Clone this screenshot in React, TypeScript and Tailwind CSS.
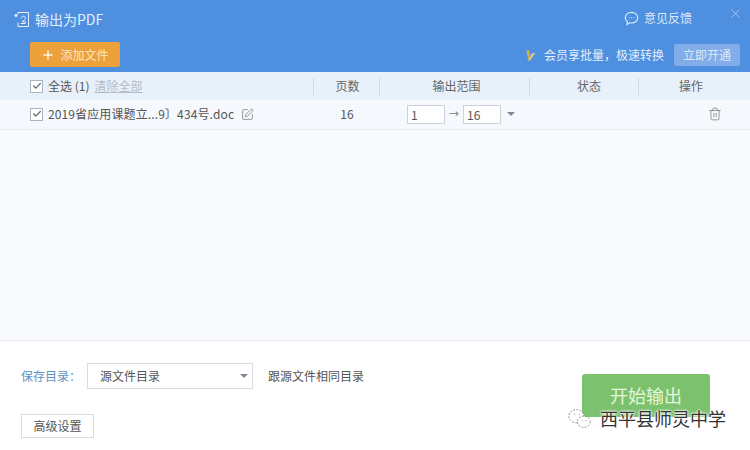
import { Check, Plus, X, SquarePen, Trash2 } from 'lucide-react';

const font = { fontFamily: '"Noto Sans CJK SC", "Liberation Sans", sans-serif' };

const Checkbox = () => (
    <span className="flex items-center justify-center w-[13px] h-[13px] border border-[#a9b4c0] bg-white shrink-0">
        <Check size={10} strokeWidth={3} className="text-[#5d6b7a]" />
    </span>
);

const HeadCell = ({ width, label, shift }: { width: string; label: string; shift: string }) => (
    <div className={`${width} ${shift} h-[17px] flex items-center justify-center border-l border-[#d0d9e3] text-xs text-[#666]`}>
        {label}
    </div>
);

const App = () => {
    return (
        <div className="relative w-[750px] h-[450px] overflow-hidden bg-white flex flex-col" style={font}>
            {/* Header */}
            <div className="h-[72px] bg-[#4f8fdf] flex flex-col shrink-0">
                <div className="h-[42px] flex items-start justify-between pl-[14px] pr-[7px] pt-[9px]">
                    <div className="flex items-center gap-[5px] text-[#e3eefb] text-[14px] leading-[20px]">
                        <svg width="16" height="17" viewBox="0 0 16 17" fill="none" stroke="#e8f1fc" strokeWidth="1">
                            <path d="M4 3.5V1.5h10.5v14H4v-4" />
                            <path d="M0.5 4.5h3M2 3v3" strokeWidth="1.4" />
                            <path d="M7 7.5c0-3 4.5-3 4.5-.3 0 2-3 2-3 3.8h3.5" />
                            <path d="M6.5 12.5h5" />
                        </svg>
                        <span>输出为PDF</span>
                    </div>
                    <div className="flex items-start">
                        <div className="flex items-center gap-[5px] mt-[1px] text-xs leading-[16px] text-[#dce9fa]">
                            <svg width="15" height="15" viewBox="0 0 14 14" fill="none" stroke="#dce9fa" strokeWidth="1.1">
                                <path d="M7 1.2c3.2 0 5.8 2.2 5.8 5s-2.6 5-5.8 5c-.6 0-1.2-.1-1.7-.2L2.8 12.6l.4-2.6C2 9.1 1.2 7.7 1.2 6.2c0-2.8 2.6-5 5.8-5z" />
                                <path d="M4.5 6.3h.8M6.7 6.3h.8M8.9 6.3h.8" />
                            </svg>
                            <span>意见反馈</span>
                        </div>
                        <X size={15} strokeWidth={1} className="text-[#cfe0f6] ml-[36px] mt-[-3px]" />
                    </div>
                </div>
                <div className="flex items-center justify-between pl-[30px] pr-[10px]">
                    <button className="w-[90px] h-[25px] bg-[#eda13a] rounded-[2px] flex items-center justify-center gap-[5px] text-xs text-[#fbe6c0]">
                        <Plus size={14} strokeWidth={2.4} className="text-[#fff6e5]" />
                        <span>添加文件</span>
                    </button>
                    <div className="flex items-center">
                        <svg width="13" height="12" viewBox="0 0 12 11" className="mr-[8px]">
                            <path d="M0.5 1h3.5l1.5 6.5L6.5 7 5.5 1z" fill="#c9b25e" />
                            <path d="M3 1h2.5L6.5 10.5H5z" fill="#c9b25e" />
                            <path d="M5 10.5h1.5L11.5 3.5 8 4z" fill="#e0ca72" />
                        </svg>
                        <span className="text-xs text-[#e3eefb] mr-[10px]">会员享批量，极速转换</span>
                        <button className="w-[66px] h-[22px] bg-[#82ade8] rounded-[2px] text-xs text-[#dce9fa]">立即开通</button>
                    </div>
                </div>
            </div>

            {/* Table head */}
            <div className="h-[28px] bg-[#e8f0fa] flex items-center shrink-0 pl-[30px]">
                <div className="w-[283px] flex items-center">
                    <Checkbox />
                    <span className="ml-[5px] text-xs leading-[16px] text-[#555]">全选 (1)</span>
                    <span className="ml-[5px] text-xs leading-[16px] text-[#b3bcc6] underline">清除全部</span>
                </div>
                <HeadCell width="w-[66px]" shift="pl-[2px]" label="页数" />
                <HeadCell width="w-[150px]" shift="pl-[4px]" label="输出范围" />
                <HeadCell width="w-[109px]" shift="pl-[10px]" label="状态" />
                <HeadCell width="w-[105px]" shift="pl-0" label="操作" />
            </div>

            {/* File row */}
            <div className="h-[30px] bg-[#f5f8fc] border-b border-[#e6ebf1] flex items-center shrink-0 pl-[30px] pb-[1px]">
                <div className="w-[283px] flex items-center">
                    <Checkbox />
                    <span className="ml-[5px] text-xs leading-[16px] tracking-[0.12px] text-[#555] whitespace-nowrap">2019省应用课题立...9〕434号.doc</span>
                    <SquarePen size={13} strokeWidth={1.2} className="ml-[7px] text-[#666]" />
                </div>
                <div className="w-[66px] pl-[2px] text-center text-xs leading-[16px] text-[#555]">16</div>
                <div className="w-[150px] flex items-center pl-[28px]">
                    <span className="w-[38px] h-[19px] bg-white border border-[#ccd3da] pl-[3px] text-xs leading-[17px] text-[#555]">1</span>
                    <span className="w-[18px] text-center text-[10px] leading-[16px] text-[#777]">→</span>
                    <span className="w-[38px] h-[19px] bg-white border border-[#ccd3da] pl-[3px] text-xs leading-[17px] text-[#555]">16</span>
                    <span className="ml-[6px] w-0 h-0 border-x-[4px] border-x-transparent border-t-[4px] border-t-[#808a94]" />
                </div>
                <div className="w-[109px]" />
                <div className="w-[105px] flex justify-center pl-[48px]">
                    <Trash2 size={14} strokeWidth={1.1} className="text-[#666]" />
                </div>
            </div>

            {/* Empty list area */}
            <div className="flex-1 bg-[#f8fafd] border-b border-[#e4e8ed]" />

            {/* Footer */}
            <div className="h-[109px] shrink-0 bg-white pl-[21px] pt-[22px] relative">
                <div className="flex items-center">
                    <span className="w-[66px] text-xs leading-[16px] text-[#5b93c4]">保存目录：</span>
                    <div className="w-[166px] h-[26px] border border-[#d9dde2] flex items-center justify-between pl-[12px] pr-[4px] text-xs text-[#555]">
                        <span>源文件目录</span>
                        <span className="w-0 h-0 border-x-[4px] border-x-transparent border-t-[4px] border-t-[#808a94]" />
                    </div>
                    <span className="ml-[15px] text-xs leading-[16px] text-[#555]">跟源文件相同目录</span>
                </div>
                <button className="mt-[25px] w-[73px] h-[24px] border border-[#d9dde2] text-xs text-[#555] bg-white">高级设置</button>
            </div>

            {/* Start button, partly covered by the watermark */}
            <button className="absolute left-[582px] top-[374px] w-[128px] h-[43px] rounded-[3px] bg-[#7cc16e] flex justify-center pt-[10px] text-[18px] leading-[22px] text-[#e4f7dd]">
                开始输出
            </button>

            {/* Watermark */}
            <div className="absolute left-[566px] top-[405px] flex items-center">
                <svg width="28" height="26" viewBox="0 0 30 26" fill="none" stroke="#8a8a8a" strokeWidth="1" strokeDasharray="2 1.5">
                    <ellipse cx="11" cy="11" rx="8" ry="7" fill="white" />
                    <ellipse cx="19" cy="17" rx="7" ry="6" fill="white" />
                    <path d="M9 9h1M14 9h1M17 16h1M21 16h1" strokeDasharray="none" />
                </svg>
                <span className="ml-[6px] text-[18px] leading-[22px] text-[#333] [text-shadow:0_0_2px_white,0_0_2px_white,0_0_3px_white]">西平县师灵中学</span>
            </div>
        </div>
    );
};

export default App;
